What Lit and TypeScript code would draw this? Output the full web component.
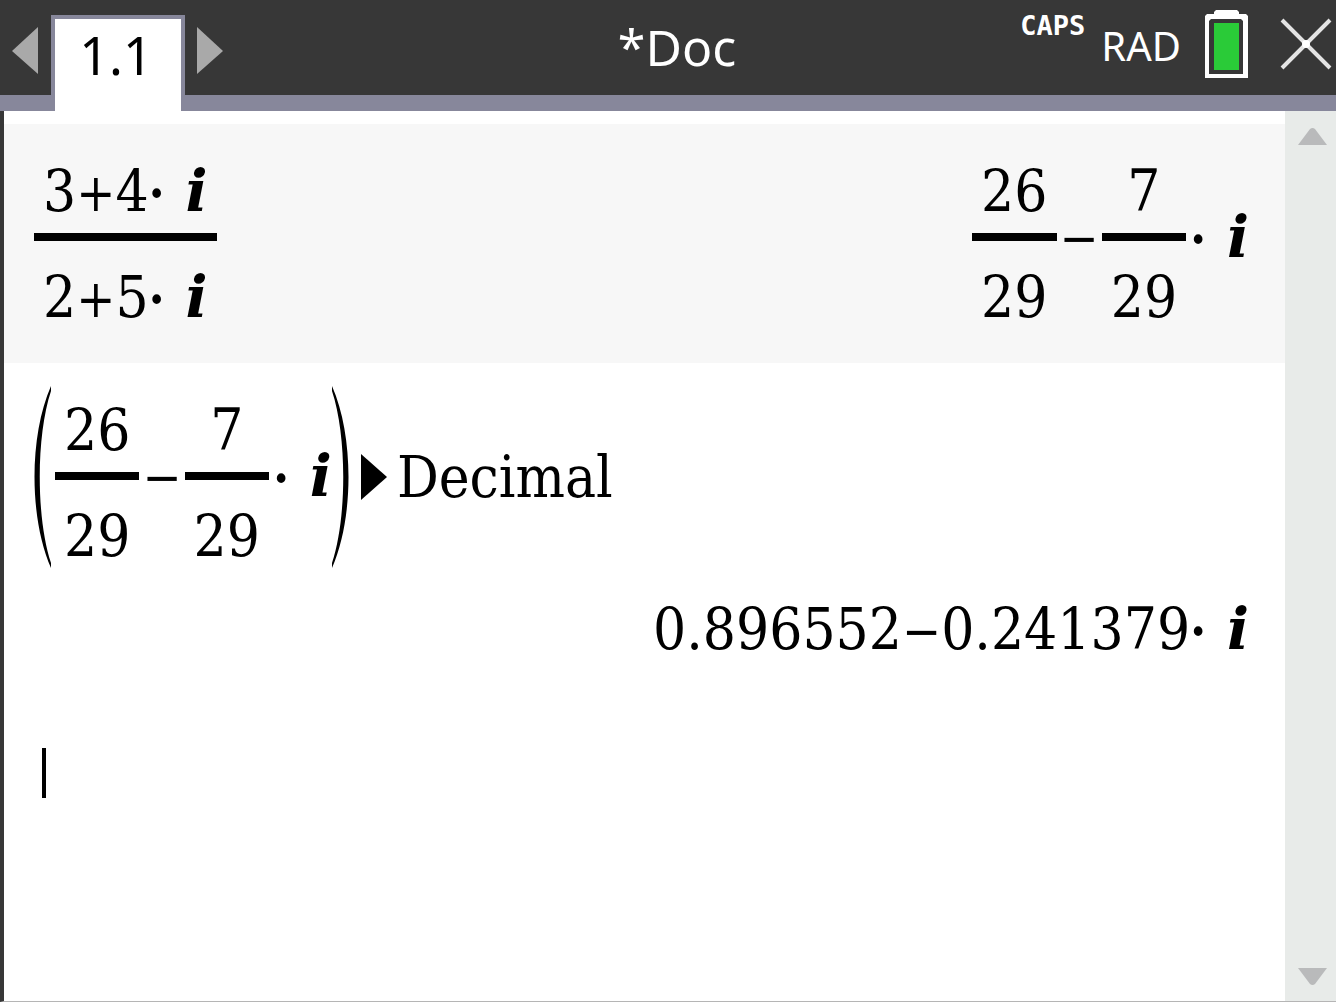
import { LitElement, html, css, svg, type TemplateResult } from "lit";
import { customElement } from "lit/decorators.js";

@customElement("math-fraction")
export class MathFraction extends LitElement {
  static styles = css`
    :host {
      display: inline-flex;
      flex-direction: column;
      align-items: center;
      padding-top: 12px;
    }
    .part {
      display: flex;
      justify-content: center;
      height: 72px;
      line-height: 72px;
      padding: 0 9px;
    }
    .bar {
      align-self: stretch;
      height: 8px;
      margin: 6px 0 20px;
      background: #000;
    }
  `;

  render() {
    return html`
      <div class="part"><slot name="top"></slot></div>
      <div class="bar"></div>
      <div class="part"><slot name="bottom"></slot></div>
    `;
  }
}

@customElement("app-root")
export class AppRoot extends LitElement {
  static styles = css`
    :host {
      display: block;
      --dark: #373737;
      --band: #87879b;
      --math: "DejaVu Serif Condensed", "DejaVu Serif", "Liberation Serif", serif;
      font-family: "Noto Sans", "Open Sans", sans-serif;
      color: #000;
    }
    * {
      box-sizing: border-box;
    }
    button {
      display: flex;
      flex: none;
      margin: 0;
      padding: 0;
      border: 0;
      background: none;
      cursor: pointer;
    }
    svg {
      display: block;
      flex: none;
    }
    .screen {
      display: flex;
      flex-direction: column;
      min-height: 100vh;
      background: #fff;
    }
    .header {
      display: grid;
      grid-template-columns: 1fr auto 1fr;
      height: 111px;
      background: linear-gradient(var(--dark) 95px, var(--band) 95px);
    }
    .tabs {
      display: flex;
      align-items: flex-start;
      gap: 12px;
      padding-left: 12px;
    }
    .tabs button {
      margin-top: 26px;
    }
    .tab {
      display: block;
      width: 134px;
      height: 96px;
      margin-top: 15px;
      padding-right: 4px;
      border: 4px solid var(--band);
      border-bottom: 0;
      background: #fff;
      color: #000;
      text-align: center;
      text-decoration: none;
      font-size: 52px;
      line-height: 72px;
    }
    .title {
      margin: 0;
      padding-left: 18px;
      color: #fff;
      font-size: 50px;
      font-weight: 400;
      line-height: 94px;
    }
    .status {
      display: flex;
      justify-content: flex-end;
      align-items: flex-start;
      color: #fff;
    }
    .caps {
      margin-right: 16px;
      font-family: "DejaVu Sans Mono", monospace;
      font-size: 27px;
      font-weight: 700;
      line-height: 52px;
    }
    .angle {
      margin-right: 24px;
      font-size: 40px;
      line-height: 92px;
    }
    .battery {
      margin: 10px 32px 0 0;
    }
    .close {
      margin-top: 18px;
    }
    .body {
      display: flex;
      flex: 1;
      border-left: 4px solid var(--dark);
      border-bottom: 1px solid #b5b5b5;
    }
    .work {
      flex: 1;
      min-width: 0;
      padding-top: 13px;
      font-family: var(--math);
      font-size: 58px;
      line-height: 72px;
    }
    .row {
      display: flex;
      flex-wrap: wrap;
      justify-content: space-between;
      padding: 19px 36px 30px 30px;
    }
    .shaded {
      background: #f7f7f7;
    }
    .plain {
      padding-bottom: 21px;
    }
    .expr {
      display: flex;
      align-items: center;
      height: 190px;
      white-space: pre;
    }
    .result {
      display: flex;
      justify-content: flex-end;
      padding: 0 36px 0 30px;
    }
    .im {
      margin-left: 4px;
      font-family: "DejaVu Serif", serif;
      font-weight: 700;
      font-style: italic;
    }
    .op,
    .dot {
      font-size: 52px;
    }
    .dot {
      font-weight: 700;
    }
    .expr > .op {
      padding: 0 3px;
    }
    .tail {
      padding-left: 4px;
    }
    .open {
      margin: 0 4px 0 0;
    }
    .shut {
      margin: 0 12px 0 0;
    }
    .convert {
      margin-right: 10px;
    }
    .entry {
      display: flex;
      align-items: center;
      margin-top: 70px;
      padding-left: 38px;
      height: 72px;
    }
    .caret {
      width: 4px;
      height: 50px;
      background: #000;
    }
    .entry input {
      flex: 1;
      min-width: 0;
      padding: 0;
      border: 0;
      outline: 0;
      background: none;
      font: inherit;
      caret-color: transparent;
    }
    .scroll {
      display: flex;
      flex: none;
      flex-direction: column;
      justify-content: space-between;
      align-items: center;
      width: 51px;
      padding: 17px 0 16px 3px;
      background: #e8ebe9;
    }
  `;

  private timesI() {
    return html`<span class="dot">·</span> <span class="im">i</span>`;
  }

  private op(sign: string) {
    return html`<span class="op">${sign}</span>`;
  }

  private fraction(top: unknown, bottom: unknown): TemplateResult {
    return html`<math-fraction
      ><span slot="top">${top}</span><span slot="bottom">${bottom}</span></math-fraction
    >`;
  }

  private quotient() {
    return html`${this.fraction("26", "29")}${this.op("−")}${this.fraction("7", "29")}<span
        class="tail"
        >${this.timesI()}</span
      >`;
  }

  private paren(closing: boolean) {
    const d = closing
      ? svg`<path d="M0 0C22 50 22 132 0 182L0 177C15 132 15 50 0 5Z" />`
      : svg`<path d="M17 0C-5 50 -5 132 17 182L17 177C2 132 2 50 17 5Z" />`;
    return html`<svg
      class=${closing ? "shut" : "open"}
      width="17"
      height="182"
      viewBox="0 0 17 182"
      aria-hidden="true"
      >${d}</svg
    >`;
  }

  render() {
    return html`
      <div class="screen">
        <header class="header">
          <nav class="tabs">
            <button type="button" aria-label="Previous page">
              <svg width="27" height="48" viewBox="0 0 27 48">
                <path d="M0 25L26 1V48Z" fill="#a9a9a9" />
              </svg>
            </button>
            <a class="tab" href="#page-1-1">1.1</a>
            <button type="button" aria-label="Next page">
              <svg width="27" height="48" viewBox="0 0 27 48">
                <path d="M26 25L0 1V48Z" fill="#a9a9a9" />
              </svg>
            </button>
          </nav>
          <h1 class="title">*Doc</h1>
          <div class="status">
            <span class="caps">CAPS</span>
            <span class="angle">RAD</span>
            <svg class="battery" width="43" height="68" viewBox="0 0 43 68" role="img" aria-label="Battery full">
              <path d="M9 4V2L11 0H32L34 2V4H41L43 6V68H0V6L2 4ZM4 11V64H38V11L36 9H6Z" fill="#fff" fill-rule="evenodd" />
              <rect x="9" y="13" width="25" height="47" fill="#2acb38" />
            </svg>
            <button class="close" type="button" aria-label="Close">
              <svg width="56" height="52" viewBox="0 0 56 52">
                <path d="M2 2L50 50M50 2L2 50" stroke="#e4e4e4" stroke-width="4" />
                <circle cx="26" cy="26" r="4" fill="#fff" />
              </svg>
            </button>
          </div>
        </header>
        <div class="body">
          <main class="work">
            <section class="row shaded">
              <div class="expr">
                ${this.fraction(
                  html`3${this.op("+")}4${this.timesI()}`,
                  html`2${this.op("+")}5${this.timesI()}`
                )}
              </div>
              <div class="expr">${this.quotient()}</div>
            </section>
            <section class="row plain">
              <div class="expr">${this.paren(false)}${this.quotient()}${this.paren(true)}<svg class="convert" width="26" height="46" viewBox="0 0 26 46" aria-hidden="true"><path d="M0 0L26 23L0 46Z" /></svg><span>Decimal</span></div>
            </section>
            <div class="result">
              <span>0.896552${this.op("−")}0.241379${this.timesI()}</span>
            </div>
            <div class="entry">
              <span class="caret"></span>
              <input type="text" aria-label="Expression" />
            </div>
          </main>
          <div class="scroll">
            <button type="button" aria-label="Scroll up">
              <svg width="29" height="17" viewBox="0 0 29 17">
                <path d="M0 17L12 1Q14.500 -1 17 1L29 17Z" fill="#b9babb" />
              </svg>
            </button>
            <button type="button" aria-label="Scroll down">
              <svg width="29" height="17" viewBox="0 0 29 17">
                <path d="M0 0H29L17 16Q14.500 18 12 16Z" fill="#b9babb" />
              </svg>
            </button>
          </div>
        </div>
      </div>
    `;
  }
}
